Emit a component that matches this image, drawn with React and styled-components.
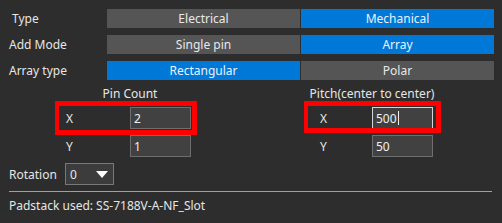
import React from "react";
import styled, { createGlobalStyle } from "styled-components";

const GlobalStyle = createGlobalStyle`
  body {
    margin: 0;
    background: #2d2d2d;
    font-family: "Noto Sans", "Open Sans", sans-serif;
    font-size: 12px;
    color: #e6e6e6;
  }
`;

const Panel = styled.div`
  width: 502px;
  height: 223px;
  box-sizing: border-box;
  padding: 9px 9px 0 9px;
  overflow: hidden;
`;

const Toggles = styled.div`
  display: grid;
  grid-template-columns: 97px 193px 193px;
  grid-auto-rows: 19px;
  column-gap: 1px;
  row-gap: 7px;
`;

const Label = styled.div`
  display: flex;
  align-items: center;
  padding-left: ${(p) => p.$indent || 0}px;
  white-space: nowrap;
`;

const Segment = styled.div`
  display: flex;
  align-items: center;
  justify-content: center;
  background: ${(p) => (p.$active ? "#0078d7" : "#555555")};
  color: ${(p) => (p.$active ? "#eaf2ff" : "#e8e8e8")};
  white-space: nowrap;
`;

const Groups = styled.div`
  display: grid;
  grid-template-columns: 242px 242px;
  margin-top: 7px;
`;

const Group = styled.div`
  display: flex;
  flex-direction: column;
  gap: 6px;
`;

const GroupTitle = styled.div`
  height: 14px;
  line-height: 14px;
  text-align: center;
  white-space: nowrap;
`;

const FieldRow = styled.div`
  position: relative;
  display: grid;
  grid-template-columns: ${(p) => p.$labelAt}px ${(p) => 121 - p.$labelAt}px 61px;
  height: 22px;
  align-items: center;

  ${(p) =>
    p.$mark &&
    `
    &::after {
      content: "";
      position: absolute;
      left: ${p.$mark.left}px;
      top: -6px;
      width: ${p.$mark.width}px;
      height: ${p.$mark.height}px;
      border: 5px solid #ff0000;
      border-left-width: 4px;
      box-sizing: border-box;
      pointer-events: none;
    }
  `}
`;

const FieldLabel = styled(Label)`
  grid-column: 2;
`;

const Field = styled.div`
  grid-column: 3;
  height: 22px;
  box-sizing: border-box;
  display: flex;
  align-items: center;
  padding-left: 3px;
  background: #414141;
  border: 1px solid ${(p) => (p.$focused ? "#d4d4d4" : "#6e6e6e")};
  color: #f0f0f0;
`;

const Caret = styled.span`
  display: inline-block;
  width: 1px;
  height: 14px;
  margin-left: 1px;
  background: #f0f0f0;
`;

const RotationRow = styled.div`
  display: flex;
  align-items: center;
  gap: 8px;
  margin-top: 6px;
  height: 22px;
`;

const Combo = styled.div`
  width: 49px;
  height: 22px;
  box-sizing: border-box;
  display: flex;
  align-items: center;
  justify-content: space-between;
  padding: 0 5px 0 4px;
  background: #3c3c3c;
  border: 1px solid #787878;
`;

const Arrow = styled.span`
  width: 0;
  height: 0;
  border-left: 6px solid transparent;
  border-right: 6px solid transparent;
  border-top: 7px solid #ffffff;
`;

const Divider = styled.hr`
  margin: 6px 1px 0 0;
  border: none;
  height: 1px;
  background: #a0a0a0;
`;

const Footer = styled.div`
  margin-top: 6px;
  line-height: 16px;
  white-space: nowrap;
`;

const toggles = [
  { label: "Type", indent: 3, options: ["Electrical", "Mechanical"], active: 1 },
  { label: "Add Mode", options: ["Single pin", "Array"], active: 1 },
  { label: "Array type", options: ["Rectangular", "Polar"], active: 0 },
];

export default function App() {
  return (
    <>
      <GlobalStyle />
      <Panel>
        <Toggles>
          {toggles.map((t) => (
            <React.Fragment key={t.label}>
              <Label $indent={t.indent}>{t.label}</Label>
              {t.options.map((o, i) => (
                <Segment key={o} $active={i === t.active}>
                  {o}
                </Segment>
              ))}
            </React.Fragment>
          ))}
        </Toggles>

        <Groups>
          <Group>
            <GroupTitle>Pin Count</GroupTitle>
            <FieldRow $labelAt={57} $mark={{ left: 46, width: 142, height: 34 }}>
              <FieldLabel>X</FieldLabel>
              <Field>2</Field>
            </FieldRow>
            <FieldRow $labelAt={57}>
              <FieldLabel>Y</FieldLabel>
              <Field>1</Field>
            </FieldRow>
          </Group>
          <Group>
            <GroupTitle>Pitch(center to center)</GroupTitle>
            <FieldRow $labelAt={69} $mark={{ left: 53, width: 137, height: 32 }}>
              <FieldLabel>X</FieldLabel>
              <Field $focused>
                500
                <Caret />
              </Field>
            </FieldRow>
            <FieldRow $labelAt={69}>
              <FieldLabel>Y</FieldLabel>
              <Field>50</Field>
            </FieldRow>
          </Group>
        </Groups>

        <RotationRow>
          <Label>Rotation</Label>
          <Combo>
            <span>0</span>
            <Arrow />
          </Combo>
        </RotationRow>

        <Divider />
        <Footer>Padstack used: SS-7188V-A-NF_Slot</Footer>
      </Panel>
    </>
  );
}
